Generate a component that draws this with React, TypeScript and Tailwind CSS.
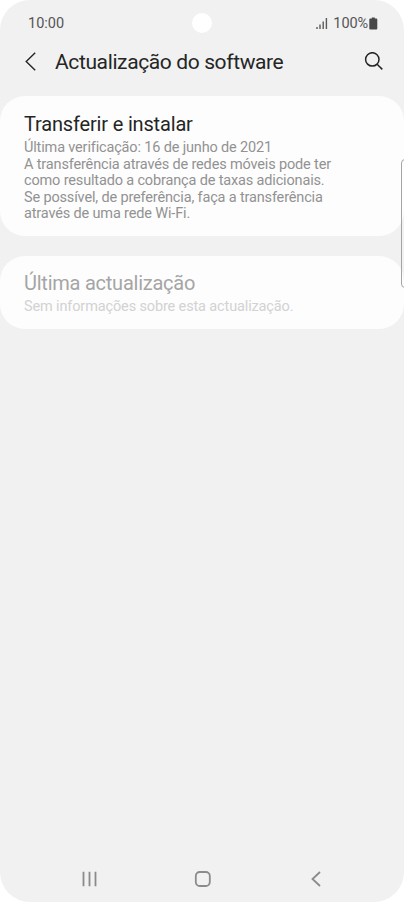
const SignalIcon = () => (
  <svg className="block h-[13px] w-[12px]" viewBox="0 0 12 13" stroke="#5a5a5a" strokeWidth="1.4">
    <path d="M1 10v2M4 7.500v4.500M7.200 4.500v7.500M10.400 1v11" fill="none" />
  </svg>
);

const BatteryIcon = () => (
  <svg className="ml-px block h-[13px] w-[9px]" viewBox="0 0 9 13" fill="#484848">
    <path d="M2.800 .4h3v1.200h1.500a1 1 0 0 1 1 1v8.900a1 1 0 0 1-1 1h-6a1 1 0 0 1-1-1V2.600a1 1 0 0 1 1-1h1.500z" />
  </svg>
);

export default function App() {
  return (
    <div className="h-[902px] w-[405px] overflow-hidden bg-white font-['Roboto',sans-serif]">
      <div className="relative flex h-[902px] w-[404px] flex-col overflow-hidden rounded-[30px] bg-[#f1f1f1]">
        <div className="absolute left-[192px] top-[13px] size-5 rounded-full bg-white" />
        <div className="absolute left-[401px] top-[159px] h-[129px] w-[10px] rounded-[4px] border border-[#a5a5a5]" />

        <header className="h-[96px] shrink-0">
          <div className="flex h-[46px] items-center pl-7 pr-[26px] text-[#555]">
            <span className="pt-[2px] text-[14.5px] leading-5">10:00</span>
            <div className="ml-auto flex items-center">
              <SignalIcon />
              <span className="ml-[5px] pt-[2px] text-[14.5px] leading-5 tracking-[-0.1px]">100%</span>
              <BatteryIcon />
            </div>
          </div>
          <div className="flex h-8 items-center pl-[25px] pr-[20.500px] text-[#252525]">
            <svg className="h-5 w-3" viewBox="0 0 12 20" fill="none" stroke="currentColor" strokeWidth="1.4">
              <path d="M10.200 0.700L1.200 9.500l9 8.800" />
            </svg>
            <h1 className="ml-[18px] whitespace-nowrap text-[21px] leading-7 tracking-[-0.38px]">Actualização do software</h1>
            <svg className="ml-auto h-5 w-5" viewBox="0 0 20 20" fill="none" stroke="currentColor" strokeWidth="1.5">
              <circle cx="8.300" cy="7.400" r="6.700" />
              <path d="M13.100 12.200l5.200 5.200" />
            </svg>
          </div>
        </header>

        <main className="flex flex-col gap-[19.5px]">
          <section className="h-[140px] rounded-[25px] bg-[#fdfdfd] pl-6 pt-[15px]">
            <h2 className="text-[20px] leading-[27px] tracking-[-0.17px] text-[#252525]">Transferir e instalar</h2>
            <p className="whitespace-nowrap pt-[2px] text-[14.5px] leading-[16.6px] tracking-[-0.155px] text-[#929292]">
              Última verificação: 16 de junho de 2021<br />
              A transferência através de redes móveis pode ter<br />
              como resultado a cobrança de taxas adicionais.<br />
              Se possível, de preferência, faça a transferência<br />
              através de uma rede Wi-Fi.
            </p>
          </section>
          <section className="h-[73.5px] rounded-[25px] bg-[#fdfdfd] pl-6 pt-[14.500px]">
            <h2 className="text-[20px] leading-[27px] tracking-[-0.24px] text-[#a5a5a5]">Última actualização</h2>
            <p className="whitespace-nowrap pt-px text-[14.5px] leading-[17px] tracking-[-0.135px] text-[#d2d2d2]">
              Sem informações sobre esta actualização.
            </p>
          </section>
        </main>

        <nav className="mt-auto flex h-[46px] items-center justify-between pl-[81px] pr-[79px] text-[#8b8b8b]">
          <svg className="size-[18px]" viewBox="0 0 18 18" fill="none" stroke="currentColor" strokeWidth="1.8">
            <path d="M2.500 1.800v14.400M8.500 1.800v14.400M14.500 1.800v14.400" />
          </svg>
          <svg className="size-[18px]" viewBox="0 0 18 18" fill="none" stroke="currentColor" strokeWidth="1.8">
            <rect x="1.800" y="2" width="14" height="14" rx="4" />
          </svg>
          <svg className="size-[18px]" viewBox="0 0 18 18" fill="none" stroke="currentColor" strokeWidth="1.8">
            <path d="M13 2L5.500 9l7.500 7" />
          </svg>
        </nav>
      </div>
    </div>
  );
}
